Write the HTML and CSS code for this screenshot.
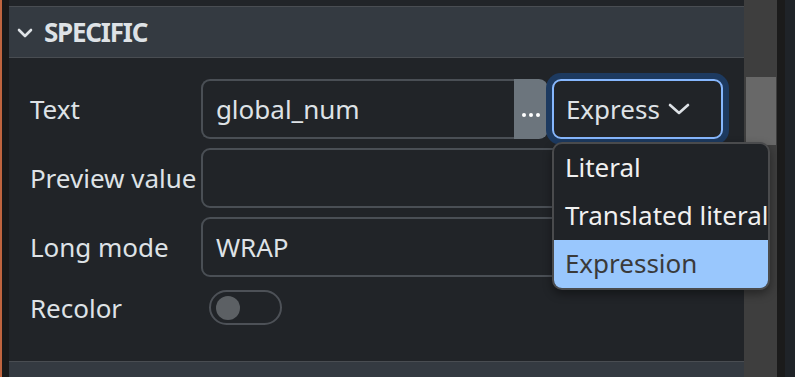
FILE: index.html
```html
<!DOCTYPE html>
<html lang="en">
<head>
    <meta charset="UTF-8">
    <meta name="viewport" content="width=device-width, initial-scale=1.0">
    <title>Widget properties</title>
    <link rel="stylesheet" href="styles.css">
</head>
<body>
    <div class="window">
        <div class="edge"></div>

        <div class="panel">
            <div class="panel-top"></div>

            <div class="section-header">
                <svg class="caret" width="16" height="10" viewBox="0 0 16 10">
                    <path d="M2 2 L8 8 L14 2" />
                </svg>
                <span>SPECIFIC</span>
            </div>

            <div class="section-body">
                <div class="prop-row">
                    <label class="prop-label">Text</label>
                    <div class="prop-field">
                        <div class="input-group">
                            <div class="text-input">global_num</div>
                            <div class="btn-more"><i></i><i></i><i></i></div>
                        </div>
                        <div class="select focused">
                            <span>Express</span>
                            <svg class="select-caret" width="22" height="12" viewBox="0 0 22 12">
                                <path d="M2 2 L11 10 L20 2" />
                            </svg>
                        </div>
                    </div>
                </div>

                <div class="prop-row">
                    <label class="prop-label">Preview value</label>
                    <div class="prop-field">
                        <div class="text-input"></div>
                    </div>
                </div>

                <div class="prop-row">
                    <label class="prop-label">Long mode</label>
                    <div class="prop-field">
                        <div class="text-input">WRAP</div>
                    </div>
                </div>

                <div class="prop-row short">
                    <label class="prop-label">Recolor</label>
                    <div class="prop-field">
                        <div class="switch"><div class="knob"></div></div>
                    </div>
                </div>

                <ul class="dropdown">
                    <li>Literal</li>
                    <li>Translated literal</li>
                    <li class="active">Expression</li>
                </ul>
            </div>

            <div class="section-header next"></div>
        </div>

        <div class="scrollbar">
            <div class="thumb"></div>
        </div>
        <div class="gutter"></div>
        <div class="outside"></div>
    </div>
</body>
</html>
```

FILE: styles.css
```css
html, body {
    margin: 0;
    padding: 0;
    height: 100%;
    overflow: hidden;
}

body {
    font-family: 'Noto Sans', 'Open Sans', sans-serif;
    background-color: #212428;
    color: #dee2e6;
}

.window {
    display: flex;
    height: 377px;
}

.edge {
    width: 7px;
    border-left: 2px solid #c0653f;
    background-color: #1a1a1a;
}

.panel {
    flex: 1;
    display: flex;
    flex-direction: column;
    background-color: #212428;
}

.panel-top {
    height: 6px;
}

.section-header {
    height: 50px;
    background-color: #343a41;
    border-top: 1px solid #494d52;
    border-bottom: 1px solid #494d52;
    display: flex;
    align-items: center;
    gap: 11px;
    padding-left: 8px;
    font-size: 26px;
    font-weight: bold;
    letter-spacing: -1.2px;
}

.section-header .caret {
    margin-top: 2px;
}

.section-header.next {
    border-bottom: none;
    flex: 1;
}

.caret path,
.select-caret path {
    fill: none;
    stroke: #dee2e6;
    stroke-width: 2.6;
    stroke-linecap: round;
    stroke-linejoin: round;
}

.section-body {
    position: relative;
    flex: 0 0 auto;
    height: 303px;
    box-sizing: border-box;
    padding: 21px 21px 0 21px;
    display: flex;
    flex-direction: column;
    gap: 9px;
}

.prop-row {
    display: flex;
    align-items: center;
    height: 60px;
    font-size: 26px;
}

.prop-row.short {
    height: 43px;
}

.prop-label {
    width: 171px;
    flex: 0 0 171px;
    white-space: nowrap;
}

.prop-field {
    flex: 1;
    display: flex;
    align-items: center;
    gap: 4px;
    height: 100%;
}

.input-group {
    display: flex;
    width: 347px;
    height: 100%;
}

.text-input {
    flex: 1;
    height: 100%;
    box-sizing: border-box;
    border: 2px solid #4a4f55;
    border-radius: 9px;
    padding: 0 13px;
    display: flex;
    align-items: center;
    background-color: #212428;
}

.input-group .text-input {
    border-top-right-radius: 0;
    border-bottom-right-radius: 0;
    border-right: none;
}

.btn-more {
    width: 34px;
    background-color: #6c757d;
    border-radius: 0 9px 9px 0;
    display: flex;
    align-items: center;
    justify-content: center;
    gap: 3px;
    padding-top: 12px;
    box-sizing: border-box;
}

.btn-more i {
    width: 4px;
    height: 4px;
    border-radius: 50%;
    background-color: #ffffff;
}

.select {
    width: 171px;
    height: 100%;
    box-sizing: border-box;
    border: 2px solid #4a4f55;
    border-radius: 9px;
    display: flex;
    align-items: center;
    padding-left: 12px;
    gap: 8px;
}

.select.focused {
    border-color: #86b7fe;
    box-shadow: 0 0 0 6px #1d3a60;
}

.switch {
    width: 73px;
    height: 35px;
    margin-left: 8px;
    box-sizing: border-box;
    border: 2px solid #4d5157;
    border-radius: 18px;
    display: flex;
    align-items: center;
    padding-left: 5px;
}

.knob {
    width: 24px;
    height: 24px;
    border-radius: 50%;
    background-color: #5c6064;
}

.dropdown {
    position: absolute;
    left: 543px;
    top: 84px;
    width: 218px;
    box-sizing: border-box;
    margin: 0;
    padding: 0;
    list-style: none;
    background-color: #202327;
    border: 2px solid #4a4b4d;
    border-radius: 10px;
    overflow: hidden;
    font-size: 26px;
    box-shadow: 0 4px 10px rgba(0, 0, 0, 0.4);
}

.dropdown li {
    height: 48px;
    display: flex;
    align-items: center;
    padding-left: 11px;
    padding-bottom: 3px;
    box-sizing: border-box;
    white-space: nowrap;
    color: #f0f0f0;
}

.dropdown li.active {
    background-color: #99c7fd;
    color: #3a3a3a;
}

.scrollbar {
    width: 34px;
    background-color: #3e3e3e;
    padding-top: 77px;
    box-sizing: border-box;
}

.thumb {
    width: 30px;
    height: 68px;
    margin-left: 2px;
    background-color: #686868;
}

.gutter {
    width: 8px;
    background-color: #1b1b1b;
}

.outside {
    width: 10px;
    background-color: #1f2328;
}
```
